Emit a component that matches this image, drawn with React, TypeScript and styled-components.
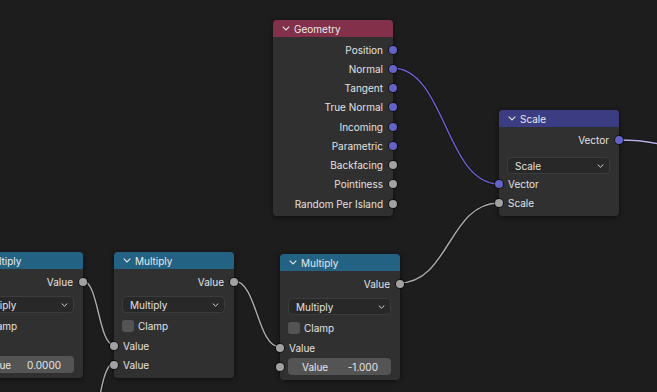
import React from 'react';
import styled, { createGlobalStyle } from 'styled-components';

const Global = createGlobalStyle`
  html, body { margin: 0; padding: 0; background: #1d1d1d; }
  body { font-family: Inter, "Noto Sans", sans-serif; -webkit-font-smoothing: antialiased; }
  #root { width: 657px; height: 392px; }
`;

const Canvas = styled.div`
  position: relative;
  width: 657px;
  height: 392px;
  overflow: hidden;
  background-color: #1d1d1d;
`;

const Wires = styled.svg`
  position: absolute;
  left: 0;
  top: 0;
  width: 657px;
  height: 392px;
  pointer-events: none;
`;

const Node = styled.div<{ $x: number; $y: number }>`
  position: absolute;
  left: ${(p) => p.$x}px;
  top: ${(p) => p.$y}px;
  width: 120px;
  background: #303030;
  border-radius: 4px;
  box-shadow: 0 1px 5px rgba(0, 0, 0, 0.55);
  display: flex;
  flex-direction: column;
`;

const Header = styled.div<{ $color: string }>`
  height: 17px;
  background: ${(p) => p.$color};
  border-radius: 4px 4px 0 0;
  display: flex;
  align-items: center;
  gap: 4px;
  padding-left: 9px;
  color: #e9e9e9;
  font-size: 10px;
`;

const Body = styled.div`
  display: flex;
  flex-direction: column;
  padding: 3px 0 3px;
`;

const Row = styled.div<{ $out?: boolean }>`
  position: relative;
  height: 19.25px;
  display: flex;
  align-items: center;
  justify-content: ${(p) => (p.$out ? 'flex-end' : 'flex-start')};
  padding: 0 10px 0 9px;
  font-size: 10px;
  color: #e2e2e2;
`;

const Socket = styled.span<{ $out?: boolean; $color: string }>`
  position: absolute;
  top: 50%;
  ${(p) => (p.$out ? 'right: -4px;' : 'left: -4px;')}
  width: 8px;
  height: 8px;
  margin-top: -4px;
  border-radius: 50%;
  background: ${(p) => p.$color};
  box-shadow: 0 0 0 1px rgba(0, 0, 0, 0.6);
`;

const SelectWrap = styled.div<{ $top: number; $bottom: number }>`
  padding: ${(p) => p.$top}px 9px ${(p) => p.$bottom}px 8px;
`;

const Select = styled.div`
  box-sizing: border-box;
  height: 17px;
  border-radius: 4px;
  background: #282828;
  border: 1px solid #3c3c3c;
  display: flex;
  align-items: center;
  justify-content: space-between;
  padding: 0 5px 0 7px;
  font-size: 10px;
  color: #e2e2e2;
`;

const Check = styled.span`
  width: 12px;
  height: 12px;
  border-radius: 3px;
  background: #545454;
  margin-right: 4px;
  margin-left: -1px;
`;

const Field = styled.div`
  box-sizing: border-box;
  flex: 1;
  height: 17px;
  margin-left: -1px;
  border-radius: 4px;
  background: #545454;
  display: flex;
  align-items: center;
  justify-content: space-between;
  padding: 0 13px 0 14px;
  font-size: 10px;
  color: #e6e6e6;
`;

const FieldRow = styled(Row)`
  padding-right: 9px;
`;

const VEC = '#6363c7';
const FLT = '#a1a1a1';

const Chevron = () => (
  <svg width="8" height="5" viewBox="0 0 8 5">
    <polyline points="0.7,0.7 4,4 7.3,0.7" fill="none" stroke="#e6e6e6" strokeWidth="1.1" />
  </svg>
);

const SmallChevron = () => (
  <svg width="7" height="4" viewBox="0 0 7 4">
    <polyline points="0.7,0.5 3.5,3.2 6.3,0.5" fill="none" stroke="#d6d6d6" strokeWidth="1" />
  </svg>
);

const Out = ({ label, color }: { label: string; color: string }) => (
  <Row $out>
    {label}
    <Socket $out $color={color} />
  </Row>
);

const In = ({ label, color }: { label: string; color: string }) => (
  <Row>
    <Socket $color={color} />
    {label}
  </Row>
);

const MultiplyNode = ({ x, y, value }: { x: number; y: number; value?: string }) => (
  <Node $x={x} $y={y}>
    <Header $color="#246283">
      <Chevron />
      Multiply
    </Header>
    <Body>
      <Out label="Value" color={FLT} />
      <SelectWrap $top={5} $bottom={3.5}>
        <Select>
          Multiply
          <SmallChevron />
        </Select>
      </SelectWrap>
      <Row>
        <Check />
        Clamp
      </Row>
      <In label="Value" color={FLT} />
      {value ? (
        <FieldRow>
          <Socket $color={FLT} />
          <Field>
            <span>Value</span>
            <span>{value}</span>
          </Field>
        </FieldRow>
      ) : (
        <In label="Value" color={FLT} />
      )}
    </Body>
  </Node>
);

const wire = (x1: number, y1: number, x2: number, y2: number) => {
  const h = Math.abs(x2 - x1) * 0.5;
  return `M${x1},${y1} C${x1 + h},${y1} ${x2 - h},${y2} ${x2},${y2}`;
};

const links: { d: string; c: string }[] = [
  { d: wire(392, 68, 499, 184), c: '#6a62cf' },
  { d: wire(619, 140, 900, 260), c: '#b8b4e6' },
  { d: wire(399, 283, 499, 203), c: '#a8a8a8' },
  { d: wire(234, 281, 280, 347), c: '#a8a8a8' },
  { d: wire(83, 281, 114, 345), c: '#a8a8a8' },
  { d: wire(80, 460, 114, 363), c: '#a8a8a8' },
];

export default function App() {
  return (
    <>
      <Global />
      <Canvas>
        <Wires viewBox="0 0 657 392">
          {links.map((l, i) => (
            <g key={i}>
              <path d={l.d} fill="none" stroke="rgba(0,0,0,0.45)" strokeWidth="3" />
              <path d={l.d} fill="none" stroke={l.c} strokeWidth="1.5" />
            </g>
          ))}
        </Wires>

        <Node $x={273} $y={20}>
          <Header $color="#83314a">
            <Chevron />
            Geometry
          </Header>
          <Body>
            <Out label="Position" color={VEC} />
            <Out label="Normal" color={VEC} />
            <Out label="Tangent" color={VEC} />
            <Out label="True Normal" color={VEC} />
            <Out label="Incoming" color={VEC} />
            <Out label="Parametric" color={VEC} />
            <Out label="Backfacing" color={FLT} />
            <Out label="Pointiness" color={FLT} />
            <Out label="Random Per Island" color={FLT} />
          </Body>
        </Node>

        <Node $x={499} $y={110}>
          <Header $color="#3c3c83">
            <Chevron />
            Scale
          </Header>
          <Body>
            <Out label="Vector" color={VEC} />
            <SelectWrap $top={8} $bottom={0}>
              <Select>
                Scale
                <SmallChevron />
              </Select>
            </SelectWrap>
            <In label="Vector" color={VEC} />
            <In label="Scale" color={FLT} />
          </Body>
        </Node>

        <MultiplyNode x={-37} y={252} value="0.0000" />
        <MultiplyNode x={114} y={252} />
        <MultiplyNode x={280} y={254} value="-1.000" />
      </Canvas>
    </>
  );
}
